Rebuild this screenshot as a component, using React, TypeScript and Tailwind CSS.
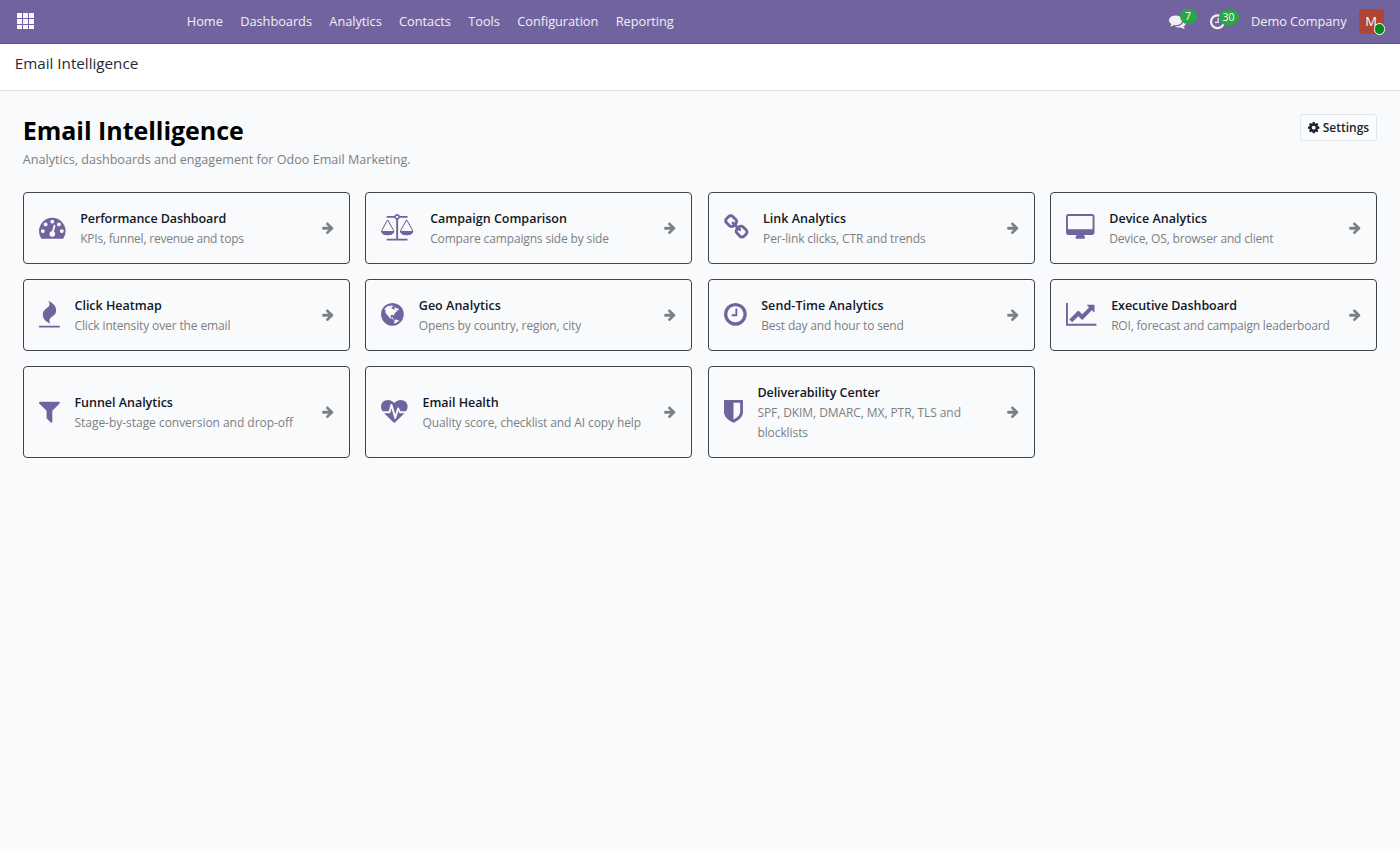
import React from 'react';

interface Glyph {
  viewBox: string;
  width: string;
  path: string;
}

interface ToolCard {
  title: string;
  description: string;
  icon: Glyph;
  spacing: string;
  titleSpacing: string;
}

const glyphs = {
  dashboard: {
    viewBox: '0 0 1792 1792',
    width: 'w-[26.6px]',
    path: 'M384 1152q0-53-37.5-90.5t-90.5-37.5-90.5 37.5-37.5 90.5 37.5 90.5 90.5 37.5 90.5-37.5 37.5-90.5zm192-448q0-53-37.5-90.5t-90.5-37.5-90.5 37.5-37.5 90.5 37.5 90.5 90.5 37.5 90.5-37.5 37.5-90.5zm428 481l101-382q6-26-7.5-48.5t-38.5-29.5-48 6.5-30 39.5l-101 382q-60 5-107 43.5t-63 98.5q-20 77 20 146t117 89 146-20 89-117q16-60-6-117t-72-91zm660-33q0-53-37.5-90.5t-90.5-37.5-90.5 37.5-37.5 90.5 37.5 90.5 90.5 37.5 90.5-37.5 37.5-90.5zm-640-640q0-53-37.5-90.5t-90.5-37.5-90.5 37.5-37.5 90.5 37.5 90.5 90.5 37.5 90.5-37.5 37.5-90.5zm448 192q0-53-37.5-90.5t-90.5-37.5-90.5 37.5-37.5 90.5 37.5 90.5 90.5 37.5 90.5-37.5 37.5-90.5zm320 448q0 261-141 483-19 29-54 29h-1402q-35 0-54-29-141-221-141-483 0-182 71-348t191-286 286-191 348-71 348 71 286 191 191 286 71 348z',
  },
  scale: {
    viewBox: '0 0 2304 1792',
    width: 'w-[34.2px]',
    path: 'M1728 448l-384 704h768zm-1280 0l-384 704h768zm821-192q-14 40-45.5 71.5t-71.5 45.5v1291h608q14 0 23 9t9 23v64q0 14-9 23t-23 9h-1344q-14 0-23-9t-9-23v-64q0-14 9-23t23-9h608v-1291q-40-14-71.5-45.5t-45.5-71.5h-491q-14 0-23-9t-9-23v-64q0-14 9-23t23-9h491q21-57 70-92.5t111-35.5 111 35.5 70 92.5h491q14 0 23 9t9 23v64q0 14-9 23t-23 9h-491zm-181 16q33 0 56.5-23.5t23.5-56.5-23.5-56.5-56.5-23.5-56.5 23.5-23.5 56.5 23.5 56.5 56.5 23.5zm1088 880q0 73-46.5 131t-117.5 91-144.5 49.5-139.5 16.5-139.5-16.5-144.5-49.5-117.5-91-46.5-131q0-11 35-81t92-174.5 107-195.5 102-184 56-100q18-33 56-33t56 33q4 7 56 100t102 184 107 195.5 92 174.5 35 81zm-1280 0q0 73-46.5 131t-117.5 91-144.5 49.5-139.5 16.5-139.5-16.5-144.5-49.5-117.5-91-46.5-131q0-11 35-81t92-174.5 107-195.5 102-184 56-100q18-33 56-33t56 33q4 7 56 100t102 184 107 195.5 92 174.5 35 81z',
  },
  link: {
    viewBox: '64 0 1664 1792',
    width: 'w-[24.7px]',
    path: 'M1520 1216q0-40-28-68l-208-208q-28-28-68-28-42 0-72 32 3 3 19 18.5t21.5 21.5 15 19 13 25.5 3.5 27.5q0 40-28 68t-68 28q-15 0-27.5-3.5t-25.5-13-19-15-21.5-21.5-18.5-19q-33 31-33 73 0 40 28 68l206 207q27 27 68 27 40 0 68-26l147-146q28-28 28-67zm-703-705q0-40-28-68l-206-207q-28-28-68-28-39 0-68 27l-147 146q-28 28-28 67 0 40 28 68l208 208q27 27 68 27 42 0 72-31-3-3-19-18.5t-21.5-21.5-15-19-13-25.5-3.5-27.5q0-40 28-68t68-28q15 0 27.5 3.5t25.5 13 19 15 21.5 21.5 18.5 19q33-31 33-73zm895 705q0 120-85 203l-147 146q-83 83-203 83-121 0-204-85l-206-207q-83-83-83-203 0-123 88-209l-88-88q-86 88-208 88-120 0-204-84l-208-208q-84-84-84-204t85-203l147-146q83-83 203-83 121 0 204 85l206 207q83 83 83 203 0 123-88 209l88 88q86-88 208-88 120 0 204 84l208 208q84 84 84 204z',
  },
  desktop: {
    viewBox: '-64 0 1920 1792',
    width: 'w-[28.5px]',
    path: 'M1728 992v-832q0-13-9.5-22.5t-22.5-9.5h-1600q-13 0-22.5 9.5t-9.5 22.5v832q0 13 9.5 22.5t22.5 9.5h1600q13 0 22.5-9.5t9.5-22.5zm128-832v1088q0 66-47 113t-113 47h-544q0 37 16 77.5t32 71 16 43.5q0 26-19 45t-45 19h-512q-26 0-45-19t-19-45q0-14 16-44t32-70 16-78h-544q-66 0-113-47t-47-113v-1088q0-66 47-113t113-47h1600q66 0 113 47t47 113z',
  },
  fire: {
    viewBox: '192 0 1408 1792',
    width: 'w-[20.9px]',
    path: 'M1600 1696v64q0 13-9.5 22.5t-22.5 9.5h-1344q-13 0-22.5-9.5t-9.5-22.5v-64q0-13 9.5-22.5t22.5-9.5h1344q13 0 22.5 9.5t9.5 22.5zm-256-1056q0 78-24.5 144t-64 112.5-87.5 88-96 77.5-87.5 72-64 81.5-24.5 96.5q0 96 67 224l-4-1 1 1q-90-41-160-83t-138.5-100-113.5-122.5-72.5-150.5-27.5-184q0-78 24.5-144t64-112.5 87.5-88 96-77.5 87.5-72 64-81.5 24.5-96.5q0-94-66-224l3 1-1-1q90 41 160 83t138.5 100 113.5 122.5 72.5 150.5 27.5 184z',
  },
  globe: {
    viewBox: '128 0 1536 1792',
    width: 'w-[22.8px]',
    path: 'M896 128q209 0 385.5 103t279.5 279.5 103 385.5-103 385.5-279.5 279.5-385.5 103-385.5-103-279.5-279.5-103-385.5 103-385.5 279.5-279.5 385.5-103zm274 521q-2 1-9.5 9.5t-13.5 9.5q2 0 4.5-5t5-11 3.5-7q6-7 22-15 14-6 52-12 34-8 51 11-2-2 9.5-13t14.5-12q3-2 15-4.5t15-7.5l2-22q-12 1-17.5-7t-6.5-21q0 2-6 8 0-7-4.5-8t-11.5 1-9 1q-10-3-15-7.5t-8-16.5-4-15q-2-5-9.5-11t-9.5-10q-1-2-2.5-5.5t-3-6.5-4-5.5-5.5-2.5-7 5-7.5 10-4.5 5q-3-2-6-1.5t-4.5 1-4.5 3-5 3.5q-3 2-8.5 3t-8.5 2q15-5-1-11-10-4-16-3 9-4 7.5-12t-8.5-14h5q-1-4-8.5-8.5t-17.5-8.5-13-6q-8-5-34-9.5t-33-.5q-5 6-4.5 10.5t4 14 3.5 12.5q1 6-5.5 13t-6.5 12q0 7 14 15.5t10 21.5q-3 8-16 16t-16 12q-5 8-1.5 18.5t10.5 16.5q2 2 1.5 4t-3.5 4.5-5.5 4-6.5 3.5l-3 2q-11 5-20.5-6t-13.5-26q-7-25-16-30-23-8-29 1-5-13-41-26-25-9-58-4 6-1 0-15-7-15-19-12 3-6 4-17.5t1-13.5q3-13 12-23 1-1 7-8.5t9.5-13.5.5-6q35 4 50-11 5-5 11.5-17t10.5-17q9-6 14-5.5t14.5 5.5 14.5 5q14 1 15.5-11t-7.5-20q12 1 3-17-4-7-8-9-12-4-27 5-8 4 2 8-1-1-9.5 10.5t-16.5 17.5-16-5q-1-1-5.5-13.5t-9.5-13.5q-8 0-16 15 3-8-11-15t-24-8q19-12-8-27-7-4-20.5-5t-19.5 4q-5 7-5.5 11.5t5 8 10.5 5.5 11.5 4 8.5 3q14 10 8 14-2 1-8.5 3.5t-11.5 4.5-6 4q-3 4 0 14t-2 14q-5-5-9-17.5t-7-16.5q7 9-25 6l-10-1q-4 0-16 2t-20.5 1-13.5-8q-4-8 0-20 1-4 4-2-4-3-11-9.5t-10-8.5q-46 15-94 41 6 1 12-1 5-2 13-6.5t10-5.5q34-14 42-7l5-5q14 16 20 25-7-4-30-1-20 6-22 12 7 12 5 18-4-3-11.5-10t-14.5-11-15-5q-16 0-22 1-146 80-235 222 7 7 12 8 4 1 5 9t2.5 11 11.5-3q9 8 3 19 1-1 44 27 19 17 21 21 3 11-10 18-1-2-9-9t-9-4q-3 5 .5 18.5t10.5 12.5q-7 0-9.5 16t-2.5 35.5-1 23.5l2 1q-3 12 5.5 34.5t21.5 19.5q-13 3 20 43 6 8 8 9 3 2 12 7.5t15 10 10 10.5q4 5 10 22.5t14 23.5q-2 6 9.5 20t10.5 23q-1 0-2.5 1t-2.5 1q3 7 15.5 14t15.5 13q1 3 2 10t3 11 8 2q2-20-24-62-15-25-17-29-3-5-5.5-15.5t-4.5-14.5q2 0 6 1.5t8.5 3.5 7.5 4 2 3q-3 7 2 17.5t12 18.5 17 19 12 13q6 6 14 19.5t0 13.5q9 0 20 10.5t17 19.5q5 8 8 26t5 24q2 7 8.5 13.5t12.5 9.5l16 8 13 7q5 2 18.5 10.5t21.5 11.5q10 4 16 4t14.5-2.5 13.5-3.5q15-2 29 15t21 21q36 19 55 11-2 1 .5 7.5t8 15.5 9 14.5 5.5 8.5q5 6 18 15t18 15q6-4 7-9-3 8 7 20t18 10q14-3 14-32-31 15-49-18 0-1-2.5-5.5t-4-8.5-2.5-8.5 0-7.5 5-3q9 0 10-3.5t-2-12.5-4-13q-1-8-11-20t-12-15q-5 9-16 8t-16-9q0 1-1.5 5.5t-1.5 6.5q-13 0-15-1 1-3 2.5-17.5t3.5-22.5q1-4 5.5-12t7.5-14.5 4-12.5-4.5-9.5-17.5-2.5q-19 1-26 20-1 3-3 10.5t-5 11.5-9 7q-7 3-24 2t-24-5q-13-8-22.5-29t-9.5-37q0-10 2.5-26.5t3-25-5.5-24.5q3-2 9-9.5t10-10.5q2-1 4.5-1.5t4.5 0 4-1.5 3-6q-1-1-4-3-3-3-4-3 7 3 28.5-1.5t27.5 1.5q15 11 22-2 0-1-2.5-9.5t-.5-13.5q5 27 29 9 3 3 15.5 5t17.5 5q3 2 7 5.5t5.5 4.5 5-.5 8.5-6.5q10 14 12 24 11 40 19 44 7 3 11 2t4.5-9.5 0-14-1.5-12.5l-1-8v-18l-1-8q-15-3-18.5-12t1.5-18.5 15-18.5q1-1 8-3.5t15.5-6.5 12.5-8q21-19 15-35 7 0 11-9-1 0-5-3t-7.5-5-4.5-2q9-5 2-16 5-3 7.5-11t7.5-10q9 12 21 2 8-8 1-16 5-7 20.5-10.5t18.5-9.5q7 2 8-2t1-12 3-12q4-5 15-9t13-5l17-11q3-4 0-4 18 2 31-11 10-11-6-20 3-6-3-9.5t-15-5.5q3-1 11.5-.5t10.5-1.5q15-10-7-16-17-5-43 12zm-163 877q206-36 351-189-3-3-12.5-4.5t-12.5-3.5q-18-7-24-8 1-7-2.5-13t-8-9-12.5-8-11-7q-2-2-7-6t-7-5.5-7.5-4.5-8.5-2-10 1l-3 1q-3 1-5.5 2.5t-5.5 3-4 3 0 2.5q-21-17-36-22-5-1-11-5.5t-10.5-7-10-1.5-11.5 7q-5 5-6 15t-2 13q-7-5 0-17.5t2-18.5q-3-6-10.5-4.5t-12 4.5-11.5 8.5-9 6.5-8.5 5.5-8.5 7.5q-3 4-6 12t-5 11q-2-4-11.5-6.5t-9.5-5.5q2 10 4 35t5 38q7 31-12 48-27 25-29 40-4 22 12 26 0 7-8 20.5t-7 21.5q0 6 2 16z',
  },
  clock: {
    viewBox: '128 0 1536 1792',
    width: 'w-[22.8px]',
    path: 'M1024 544v448q0 14-9 23t-23 9h-320q-14 0-23-9t-9-23v-64q0-14 9-23t23-9h224v-352q0-14 9-23t23-9h64q14 0 23 9t9 23zm416 352q0-148-73-273t-198-198-273-73-273 73-198 198-73 273 73 273 198 198 273 73 273-73 198-198 73-273zm224 0q0 209-103 385.5t-279.5 279.5-385.5 103-385.5-103-279.5-279.5-103-385.5 103-385.5 279.5-279.5 385.5-103 385.5 103 279.5 279.5 103 385.5z',
  },
  lineChart: {
    viewBox: '0 0 2048 1792',
    width: 'w-[30.4px]',
    path: 'M2048 1536v128h-2048v-1536h128v1408h1920zm-128-1248v435q0 21-19.5 29.5t-35.5-7.5l-121-121-633 633q-10 10-23 10t-23-10l-233-233-416 416-192-192 585-585q10-10 23-10t23 10l233 233 464-464-121-121q-16-16-7.5-35.5t29.5-19.5h435q14 0 23 9t9 23z',
  },
  filter: {
    viewBox: '192 0 1408 1792',
    width: 'w-[20.9px]',
    path: 'M1595 295q17 41-14 70l-493 493v742q0 42-39 59-13 5-25 5-27 0-45-19l-256-256q-19-19-19-45v-486l-493-493q-31-29-14-70 17-39 59-39h1280q42 0 59 39z',
  },
  heartbeat: {
    viewBox: '0 0 1792 1792',
    width: 'w-[26.6px]',
    path: 'M1280 1024h305q-5 6-10 10.5t-9 7.5l-3 4-623 600q-18 18-44 18t-44-18l-624-602q-5-2-21-20h369q22 0 39.5-13.5t22.5-34.5l70-281 190 667q6 20 23 33t39 13q21 0 38-13t23-33l146-485 56 112q18 35 57 35zm512-428q0 145-103 300h-369l-111-221q-8-17-25.5-27t-36.5-8q-45 5-56 46l-129 430-196-686q-6-20-23.5-33t-39.5-13-39 13.5-22 34.5l-116 464h-423q-103-155-103-300 0-220 127-344t351-124q62 0 126.5 21.5t120 58 95.5 68.5 76 68q36-36 76-68t95.5-68.5 120-58 126.5-21.5q224 0 351 124t127 344z',
  },
  shield: {
    viewBox: '256 0 1280 1792',
    width: 'w-[19px]',
    path: 'M1344 960v-640h-448v1137q119-63 213-137 235-184 235-360zm192-768v768q0 86-33.5 170.5t-83 150-118 127.5-126.5 103-121 77.5-89.5 49.5-42.5 20q-12 6-26 6t-26-6q-16-7-42.5-20t-89.5-49.5-121-77.5-126.5-103-118-127.5-83-150-33.5-170.5v-768q0-26 19-45t45-19h1152q26 0 45 19t19 45z',
  },
  comments: {
    viewBox: '0 0 1792 1792',
    width: 'w-[17px]',
    path: 'M1408 768q0 139-94 257t-256.5 186.5-353.5 68.5q-86 0-176-16-124 88-278 128-36 9-86 16h-3q-11 0-20.5-8t-11.5-21q-1-3-1-6.5t.5-6.5 2-6l2.5-5 3.5-5.5 4-5 4.5-5 4-4.5q5-6 23-25t26-29.5 22.5-29 25-38.5 20.5-44q-124-72-195-177t-71-224q0-139 94-257t256.5-186.5 353.5-68.5 353.5 68.5 256.5 186.5 94 257zm384 256q0 120-71 224.5t-195 176.5q10 24 20.5 44t25 38.5 22.5 29 26 29.5 23 25q1 1 4 4.5t4.5 5 4 5 3.5 5.5l2.5 5 2 6 .5 6.5-1 6.5q-3 14-13 22t-22 7q-50-7-86-16-154-40-278-128-90 16-176 16-271 0-472-132 58 4 88 4 161 0 309-45t264-129q125-92 192-212t67-254q0-77-23-150 129 71 204 178t75 230z',
  },
  cog: {
    viewBox: '128 0 1536 1792',
    width: 'w-[11.4px]',
    path: 'M1152 896q0-106-75-181t-181-75-181 75-75 181 75 181 181 75 181-75 75-181zm512-109v222q0 12-8 23t-20 13l-185 28q-19 54-39 91 35 50 107 138 10 12 10 25t-9 23q-27 37-99 108t-94 71q-12 0-26-9l-138-108q-44 23-91 38-16 136-29 186-7 28-36 28h-222q-14 0-24.5-8.5t-11.5-21.5l-28-184q-49-16-90-37l-141 107q-10 9-25 9-14 0-25-11-126-114-165-168-7-10-7-23 0-12 8-23 15-21 51-66.5t54-70.5q-27-50-41-99l-183-27q-13-2-21-12.5t-8-23.5v-222q0-12 8-23t19-13l186-28q14-46 39-92-40-57-107-138-10-12-10-24 0-10 9-23 26-36 98.5-107.5t94.5-71.5q13 0 26 10l138 107q44-23 91-38 16-136 29-186 7-28 36-28h222q14 0 24.5 8.5t11.5 21.5l28 184q49 16 90 37l142-107q9-9 24-9 13 0 25 10 129 119 165 170 7 8 7 22 0 12-8 23-15 21-51 66.5t-54 70.5q26 50 41 98l183 28q13 2 21 12.5t8 23.5z',
  },
  arrow: {
    viewBox: '96 0 1536 1792',
    width: 'w-[11.6px]',
    path: 'M1600 960q0 54-37 91l-651 651q-39 37-91 37-51 0-90-37l-75-75q-38-38-38-91t38-91l293-293h-704q-52 0-84.5-37.5t-32.5-90.5v-128q0-53 32.5-90.5t84.5-37.5h704l-293-294q-38-36-38-90t38-90l75-75q38-38 90-38 53 0 91 38l651 651q37 35 37 90z',
  },
};

const cards: ToolCard[] = [
  { title: 'Performance Dashboard', description: 'KPIs, funnel, revenue and tops', icon: glyphs.dashboard, spacing: 'tracking-[-0.21px]', titleSpacing: 'tracking-[-0.09px]' },
  { title: 'Campaign Comparison', description: 'Compare campaigns side by side', icon: glyphs.scale, spacing: 'tracking-[-0.15px]', titleSpacing: 'tracking-normal' },
  { title: 'Link Analytics', description: 'Per-link clicks, CTR and trends', icon: glyphs.link, spacing: 'tracking-[-0.14px]', titleSpacing: 'tracking-normal' },
  { title: 'Device Analytics', description: 'Device, OS, browser and client', icon: glyphs.desktop, spacing: 'tracking-[-0.17px]', titleSpacing: 'tracking-[0.02px]' },
  { title: 'Click Heatmap', description: 'Click intensity over the email', icon: glyphs.fire, spacing: 'tracking-[-0.13px]', titleSpacing: 'tracking-normal' },
  { title: 'Geo Analytics', description: 'Opens by country, region, city', icon: glyphs.globe, spacing: 'tracking-[-0.13px]', titleSpacing: 'tracking-[0.04px]' },
  { title: 'Send-Time Analytics', description: 'Best day and hour to send', icon: glyphs.clock, spacing: 'tracking-[-0.18px]', titleSpacing: 'tracking-[0.08px]' },
  { title: 'Executive Dashboard', description: 'ROI, forecast and campaign leaderboard', icon: glyphs.lineChart, spacing: 'tracking-[-0.19px]', titleSpacing: 'tracking-[-0.07px]' },
  { title: 'Funnel Analytics', description: 'Stage-by-stage conversion and drop-off', icon: glyphs.filter, spacing: 'tracking-[-0.03px]', titleSpacing: 'tracking-[-0.02px]' },
  { title: 'Email Health', description: 'Quality score, checklist and AI copy help', icon: glyphs.heartbeat, spacing: 'tracking-[-0.11px]', titleSpacing: 'tracking-[-0.05px]' },
  { title: 'Deliverability Center', description: 'SPF, DKIM, DMARC, MX, PTR, TLS and blocklists', icon: glyphs.shield, spacing: 'tracking-[-0.08px]', titleSpacing: 'tracking-[-0.05px]' },
];

const menu = ['Home', 'Dashboards', 'Analytics', 'Contacts', 'Tools', 'Configuration', 'Reporting'];

function Icon({ glyph, className = '' }: { glyph: Glyph; className?: string }) {
  return (
    <svg viewBox={glyph.viewBox} className={`shrink-0 overflow-visible ${glyph.width} ${className}`} fill="currentColor" aria-hidden="true">
      <path d={glyph.path} />
    </svg>
  );
}

function Navbar() {
  return (
    <header className="h-[43.5px] border-b border-[#5f5190] bg-[#71639e] text-white/90 flex items-center text-[12.8px]">
      <button className="ml-[17px] grid grid-cols-3 gap-px w-[16.5px] h-[16.5px]" aria-label="Apps">
        {Array.from({ length: 9 }, (_, i) => (
          <span key={i} className="bg-white/95 w-full h-[4.8px]" />
        ))}
      </button>
      <nav className="ml-[153.3px] pt-[1.5px] flex gap-[17.4px]">
        {menu.map((item) => (
          <a key={item} className="whitespace-nowrap tracking-[-0.04px]">{item}</a>
        ))}
      </nav>
      <div className="ml-auto mr-[16.5px] flex items-center">
        <button className="relative flex" aria-label="Messages">
          <Icon glyph={glyphs.comments} />
          <span className="absolute left-[11px] -top-[4px] h-[15.5px] w-[17px] rounded-full bg-[#28a745] text-white text-[10.5px] leading-[15px] text-center">7</span>
        </button>
        <button className="relative ml-[24.5px] flex" aria-label="Activities">
          <Icon glyph={{ ...glyphs.clock, width: 'w-[15px]' }} />
          <span className="absolute left-[8.5px] -top-[3px] h-[15.5px] w-[20px] rounded-full bg-[#28a745] text-white text-[10.5px] leading-[15px] text-center">30</span>
        </button>
        <span className="ml-[26px] pt-[1.5px] whitespace-nowrap tracking-[-0.06px]">Demo Company</span>
        <div className="relative ml-[12px] w-[25px] h-[25px] rounded-[4px] bg-[#ae4535] text-white text-[13px] leading-[25px] text-center">
          M
          <span className="absolute left-[15px] top-[14.5px] w-[11.5px] h-[11.5px] rounded-full border border-white bg-[#008818]" />
        </div>
      </div>
    </header>
  );
}

function Card({ card }: { card: ToolCard }) {
  return (
    <a className="border border-[#3f4348] rounded-[4px] pl-[15.2px] pr-[15.4px] pt-[15.9px] pb-[13.9px] flex items-center">
      <Icon glyph={card.icon} className="mb-[2.5px] text-[#71639e]" />
      <div className="ml-[14.6px] flex-1 min-w-0">
        <div className={`text-[12.5px] leading-5 font-semibold text-[#111827] ${card.titleSpacing}`}>{card.title}</div>
        <div className={`text-[12px] leading-5 text-[#7c8083] ${card.spacing}`}>{card.description}</div>
      </div>
      <Icon glyph={glyphs.arrow} className="ml-[12px] mb-[2px] text-[#7c8083]" />
    </a>
  );
}

export default function App() {
  return (
    <div className="min-h-screen bg-[#f9fafb] flex flex-col font-['Open_Sans','Noto_Sans',sans-serif]">
      <Navbar />
      <div className="h-[47.5px] bg-white border-b border-[#e0e3e6] px-[14.8px] pt-[8px] text-[15.2px] leading-[22px] text-[#1f2937]">
        Email Intelligence
      </div>
      <main className="px-[22.8px] pt-[22.5px]">
        <div className="flex items-start justify-between">
          <div>
            <h1 className="-mt-px text-[25px] leading-[35px] font-bold tracking-[-0.03px] text-black">Email Intelligence</h1>
            <p className="mt-[2px] text-[12.6px] leading-[20px] text-[#7c8083]">Analytics, dashboards and engagement for Odoo Email Marketing.</p>
          </div>
          <button className="border border-[#e3e6e9] rounded-[3px] h-[27px] w-[77px] pt-px flex items-center justify-center gap-[3px] text-[12px] font-semibold text-[#1f2329] bg-[#fbfcfd]">
            <Icon glyph={glyphs.cog} />
            Settings
          </button>
        </div>
        <div className="mt-[22.5px] grid grid-cols-4 gap-[15.2px]">
          {cards.map((card) => (
            <Card key={card.title} card={card} />
          ))}
        </div>
      </main>
    </div>
  );
}
